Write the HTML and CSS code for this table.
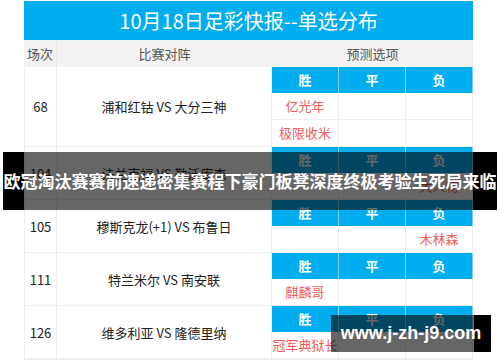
FILE: index.html
```html
<!DOCTYPE html>
<html lang="zh-CN">
<head>
<meta charset="utf-8">
<title>10月18日足彩快报</title>
<link rel="stylesheet" href="styles.css">
</head>
<body>
<div class="page">
  <div class="sheet">
    <div class="title">10月18日足彩快报--单选分布</div>
    <div class="head">
      <div class="c-no">场次</div>
      <div class="c-match">比赛对阵</div>
      <div class="c-pred">预测选项</div>
    </div>

    <div class="row">
      <div class="c-no">68</div>
      <div class="c-match">浦和红钴 VS 大分三神</div>
      <div class="c-pred sub">
        <div class="sh">胜</div><div class="sh">平</div><div class="sh">负</div>
        <div class="sd red">亿光年</div><div class="sd"></div><div class="sd"></div>
        <div class="sd red">极限收米</div><div class="sd"></div><div class="sd"></div>
      </div>
    </div>

    <div class="row">
      <div class="c-no">104</div>
      <div class="c-match">法兰克福 VS 勒沃库森</div>
      <div class="c-pred sub">
        <div class="sh">胜</div><div class="sh">平</div><div class="sh">负</div>
        <div class="sd"></div><div class="sd"></div><div class="sd red">大人物</div>
      </div>
    </div>

    <div class="row">
      <div class="c-no">105</div>
      <div class="c-match">穆斯克龙(+1) VS 布鲁日</div>
      <div class="c-pred sub">
        <div class="sh">胜</div><div class="sh">平</div><div class="sh">负</div>
        <div class="sd"></div><div class="sd"></div><div class="sd red">木林森</div>
      </div>
    </div>

    <div class="row">
      <div class="c-no">111</div>
      <div class="c-match">特兰米尔 VS 南安联</div>
      <div class="c-pred sub">
        <div class="sh">胜</div><div class="sh">平</div><div class="sh">负</div>
        <div class="sd red">麒麟哥</div><div class="sd"></div><div class="sd"></div>
      </div>
    </div>

    <div class="row">
      <div class="c-no">126</div>
      <div class="c-match">维多利亚 VS 隆德里纳</div>
      <div class="c-pred sub">
        <div class="sh">胜</div><div class="sh">平</div><div class="sh">负</div>
        <div class="sd red">冠军典狱长</div><div class="sd"></div><div class="sd"></div>
      </div>
    </div>
  </div>

  <div class="caption">欧冠淘汰赛赛前速递密集赛程下豪门板凳深度终极考验生死局来临</div>
  <div class="mark">www.j-zh-j9.com</div>
</div>
</body>
</html>
```

FILE: styles.css
```css
html, body {
  margin: 0;
  padding: 0;
  background: #fff;
}

.page {
  position: relative;
  width: 500px;
  height: 362px;
  overflow: hidden;
  font-family: "Noto Sans CJK SC", "Noto Sans", sans-serif;
}

.sheet {
  margin: 1px 0 0 24px;
  width: 449px;
  border-bottom: 1px solid #eee;
}

.title {
  height: 39px;
  background: #00aeef;
  color: #fff;
  font-size: 20px;
  line-height: 39px;
  text-align: center;
  border-bottom: 1px solid #e8f6fd;
}

.head {
  display: flex;
  height: 26px;
  background: #f2f2f2;
  color: #555;
  font-size: 13px;
  line-height: 26px;
  text-align: center;
}

.c-no {
  width: 33px;
  flex: none;
  box-sizing: border-box;
  border-right: 1px solid #eee;
}

.head .c-no {
  border-right-color: #e6e6e6;
}

.c-match {
  width: 215px;
  flex: none;
  box-sizing: border-box;
  border-right: 1px solid #eee;
}

.head .c-match {
  border-right: none;
}

.c-pred {
  width: 201px;
  flex: none;
}

.row {
  display: flex;
  border-left: 1px solid #eee;
  color: #222;
  font-size: 13px;
  text-align: center;
}

.row .c-no {
  width: 32px;
}

.row .c-no,
.row .c-match {
  display: flex;
  align-items: center;
  justify-content: center;
  border-bottom: 1px solid #eee;
}

.sub {
  display: grid;
  grid-template-columns: 67px 67px 67px;
}

.sh {
  height: 26px;
  box-sizing: border-box;
  background: #00aeef;
  color: #fff;
  font-weight: bold;
  line-height: 26px;
  border-right: 1px solid #7fd3f5;
}

.sd {
  height: 27px;
  box-sizing: border-box;
  line-height: 26px;
  border-right: 1px solid #eee;
  border-bottom: 1px solid #eee;
  white-space: nowrap;
}

.red {
  color: #f55a5a;
}

.caption {
  position: absolute;
  left: 3px;
  top: 152px;
  width: 494px;
  height: 58px;
  background: linear-gradient(to right,
    #000 21px,
    rgba(0, 0, 0, 0.6) 21px,
    rgba(0, 0, 0, 0.6) 470px,
    #000 470px);
  color: #fff;
  font-size: 17px;
  font-weight: bold;
  line-height: 58px;
  text-align: center;
  white-space: nowrap;
}

.mark {
  position: absolute;
  left: 331px;
  top: 315px;
  width: 160px;
  height: 37px;
  background: linear-gradient(to right,
    rgba(0, 0, 0, 0.6) 143px,
    #000 143px);
  color: #fff;
  font-family: "Liberation Sans", Arial, sans-serif;
  font-size: 18px;
  font-weight: bold;
  line-height: 37px;
  text-align: center;
  white-space: nowrap;
}
```
